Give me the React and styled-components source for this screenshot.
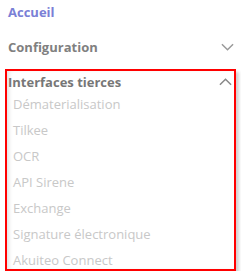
import React from 'react';
import styled, { createGlobalStyle } from 'styled-components';

const items = [
  'Dématerialisation',
  'Tilkee',
  'OCR',
  'API Sirene',
  'Exchange',
  'Signature électronique',
  'Akuiteo Connect',
];

const Chevron = ({ up }) => (
  <ChevronSvg viewBox="0 0 14 8" up={up ? 1 : 0}>
    <path d="M1 1 L7 7 L13 1" fill="none" stroke="currentColor" strokeWidth="1.6" />
  </ChevronSvg>
);

const App = () => {
  return (
    <>
      <GlobalStyle />
      <Menu>
        <TopLink>Accueil</TopLink>
        <SectionHeader>
          <SectionTitle>Configuration</SectionTitle>
          <Chevron />
        </SectionHeader>
        <Panel>
          <SectionHeader open>
            <SectionTitle open>Interfaces tierces</SectionTitle>
            <Chevron up />
          </SectionHeader>
          <SubList>
            {items.map((item) => (
              <SubItem key={item}>{item}</SubItem>
            ))}
          </SubList>
        </Panel>
      </Menu>
    </>
  );
};

export default App;

// Styled components
const GlobalStyle = createGlobalStyle`
  body {
    margin: 0;
    background: #ffffff;
    font-family: "Open Sans", "Noto Sans", sans-serif;
  }
`;

const Menu = styled.nav`
  width: 241px;
  display: flex;
  flex-direction: column;
`;

const TopLink = styled.div`
  padding: 0 8px;
  height: 24px;
  line-height: 24px;
  font-size: 13px;
  font-weight: 700;
  color: #7a80d6;
`;

const SectionHeader = styled.div`
  display: flex;
  align-items: center;
  justify-content: space-between;
  height: ${(p) => (p.open ? '21px' : '22px')};
  padding: ${(p) => (p.open ? '0 2px 0 1px' : '0 7px 0 8px')};
  margin-top: ${(p) => (p.open ? '0' : '12px')};
  color: ${(p) => (p.open ? '#888888' : '#9a9a9a')};
`;

const SectionTitle = styled.span`
  font-size: 13px;
  font-weight: 700;
  color: ${(p) => (p.open ? '#777777' : '#808080')};
`;

const ChevronSvg = styled.svg`
  width: 13px;
  height: 8px;
  transform: ${(p) => (p.up ? 'rotate(180deg)' : 'none')};
`;

const Panel = styled.div`
  margin: 11px 0 0 5px;
  width: 227px;
  border: 2px solid #ff0000;
  background: #ffffff;
  box-shadow: 3px 3px 3px rgba(0, 0, 0, 0.18), inset 4px 0 4px -2px rgba(0, 0, 0, 0.12);
`;

const SubList = styled.ul`
  list-style: none;
  margin: 0;
  padding: 0 0 0 6px;
`;

const SubItem = styled.li`
  height: 26px;
  line-height: 25px;
  font-size: 13px;
  color: #c8c8c8;

  &:last-child {
    height: 21px;
  }
`;
